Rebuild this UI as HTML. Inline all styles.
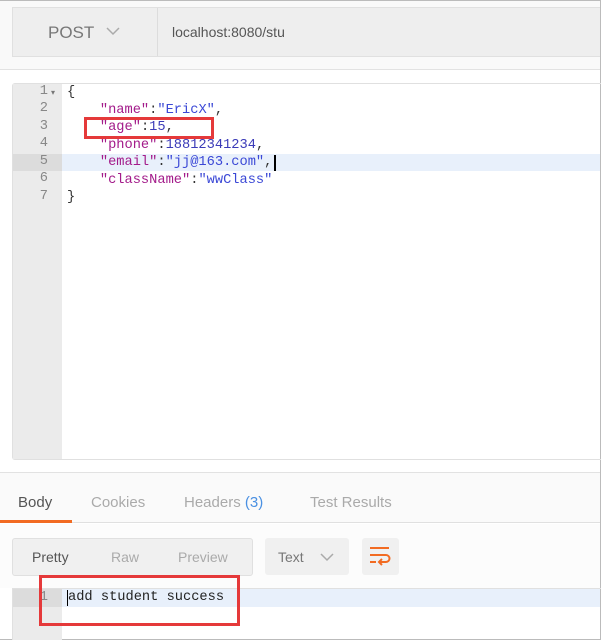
<!DOCTYPE html>
<html><head><style>
*{margin:0;padding:0;box-sizing:border-box}
body{width:601px;height:640px;overflow:hidden;background:#fff;font-family:"Liberation Sans",sans-serif;position:relative}
.a{position:absolute}
.mono{font-family:"Liberation Mono",monospace;font-size:13.7px}
.ln{position:absolute;left:12px;width:36px;text-align:right;color:#888;font-family:"Liberation Mono",monospace;font-size:13.7px}
.k{color:#a31b8a}.s{color:#3b48d6}.n{color:#3b3bb8}.p{color:#333}
</style></head><body>
<div class="a" style="left:0;top:0;width:601px;height:70px;background:#f9f9f9;border-bottom:1px solid #e2e2e2"></div>
<div class="a" style="left:12px;top:7px;width:589px;height:50px;background:#eeeeee;border:1px solid #e0e0e0"></div>
<div class="a" style="left:157px;top:8px;width:1px;height:48px;background:#dcdcdc"></div>
<div class="a" style="left:48px;top:23px;font-size:17px;color:#777">POST</div>
<svg class="a" style="left:106px;top:27px" width="14" height="9"><path d="M1 1L7 7L13 1" stroke="#aaa" stroke-width="1.5" fill="none"/></svg>
<div class="a" style="left:172px;top:24px;font-size:14px;color:#555">localhost:8080/stu</div>
<div class="a" style="left:0;top:0;width:601px;height:640px;border-top:1px solid #bbb;border-right:1px solid #bbb;border-bottom:1px solid #bbb"></div>

<div class="a" style="left:12px;top:83px;width:589px;height:377px;border:1px solid #e0e0e0;border-right:none;border-radius:3px 0 0 3px"></div>
<div class="a" style="left:13px;top:84px;width:49px;height:375px;background:#ebebeb"></div>
<div class="a" style="left:62px;top:154px;width:538px;height:17px;background:#e8f0fb"></div>
<div class="a" style="left:13px;top:154px;width:49px;height:17px;background:#dcdcdc"></div>
<div class="ln" style="top:84px">1</div><div class="a" style="left:51px;top:88px;font-size:8px;color:#777">▾</div>
<div class="ln" style="top:101px">2</div><div class="ln" style="top:119px">3</div><div class="ln" style="top:136px">4</div><div class="ln" style="top:154px">5</div><div class="ln" style="top:171px">6</div><div class="ln" style="top:189px">7</div>
<div class="a mono" style="left:67px;top:84px;line-height:17.5px;white-space:pre"><span class="p">{</span>
    <span class="k">"name"</span><span class="p">:</span><span class="s">"EricX"</span><span class="p">,</span>
    <span class="k">"age"</span><span class="p">:</span><span class="n">15</span><span class="p">,</span>
    <span class="k">"phone"</span><span class="p">:</span><span class="n">18812341234</span><span class="p">,</span>
    <span class="k">"email"</span><span class="p">:</span><span class="s">"jj@163.com"</span><span class="p">,</span>
    <span class="k">"className"</span><span class="p">:</span><span class="s">"wwClass"</span>
<span class="p">}</span></div>
<div class="a" style="left:274px;top:155px;width:2px;height:16px;background:#000"></div>
<div class="a" style="left:84px;top:117px;width:130px;height:22px;border:3px solid #e5393a"></div>

<div class="a" style="left:0;top:472px;width:600px;height:1px;background:#e2e2e2"></div>
<div class="a" style="left:0;top:473px;width:600px;height:50px;background:#fafafa;border-bottom:1px solid #e0e0e0"></div>
<div class="a" style="left:0;top:520px;width:72px;height:3px;background:#f26b22"></div>
<div class="a" style="left:18px;top:494px;font-size:15px;color:#555">Body</div>
<div class="a" style="left:91px;top:494px;font-size:15px;color:#aaa">Cookies</div>
<div class="a" style="left:184px;top:494px;font-size:15px;color:#aaa">Headers <span style="color:#4a90e2">(3)</span></div>
<div class="a" style="left:310px;top:494px;font-size:15px;color:#aaa">Test Results</div>
<div class="a" style="left:0;top:524px;width:600px;height:64px;background:#fcfcfc"></div>
<div class="a" style="left:12px;top:538px;width:241px;height:38px;background:#f0f0f0;border:1px solid #e0e0e0;border-radius:3px"></div>
<div class="a" style="left:32px;top:549px;font-size:14px;color:#555">Pretty</div>
<div class="a" style="left:111px;top:549px;font-size:14px;color:#aaa">Raw</div>
<div class="a" style="left:178px;top:549px;font-size:14px;color:#aaa">Preview</div>
<div class="a" style="left:265px;top:538px;width:84px;height:37px;background:#f0f0f0;border-radius:3px"></div>
<div class="a" style="left:278px;top:549px;font-size:14px;color:#777">Text</div>
<svg class="a" style="left:320px;top:553px" width="14" height="9"><path d="M1 1L7 7L13 1" stroke="#aaa" stroke-width="1.5" fill="none"/></svg>
<div class="a" style="left:362px;top:538px;width:37px;height:37px;background:#f0f0f0;border-radius:3px"></div>
<svg class="a" style="left:368px;top:545px" width="24" height="22"><path d="M2 3H21M2 10H18a3.5 3.5 0 0 1 0 7H12M2 17H8" stroke="#f26b22" stroke-width="2" fill="none"/><path d="M14 14L11 17L14 20" stroke="#f26b22" stroke-width="2" fill="none"/></svg>
<div class="a" style="left:12px;top:588px;width:589px;height:52px;border-top:1px solid #e0e0e0;border-left:1px solid #e0e0e0"></div>
<div class="a" style="left:13px;top:589px;width:49px;height:51px;background:#ebebeb"></div>
<div class="a" style="left:62px;top:589px;width:538px;height:18px;background:#e8f0fb"></div>
<div class="a" style="left:13px;top:589px;width:49px;height:18px;background:#dcdcdc"></div>
<div class="ln" style="top:590px">1</div>
<div class="a mono" style="left:68px;top:590px;color:#222">add student success</div>
<div class="a" style="left:67px;top:590px;width:1px;height:16px;background:#000"></div>
<div class="a" style="left:39px;top:575px;width:201px;height:51px;border:3px solid #e5393a"></div>
</body></html>
